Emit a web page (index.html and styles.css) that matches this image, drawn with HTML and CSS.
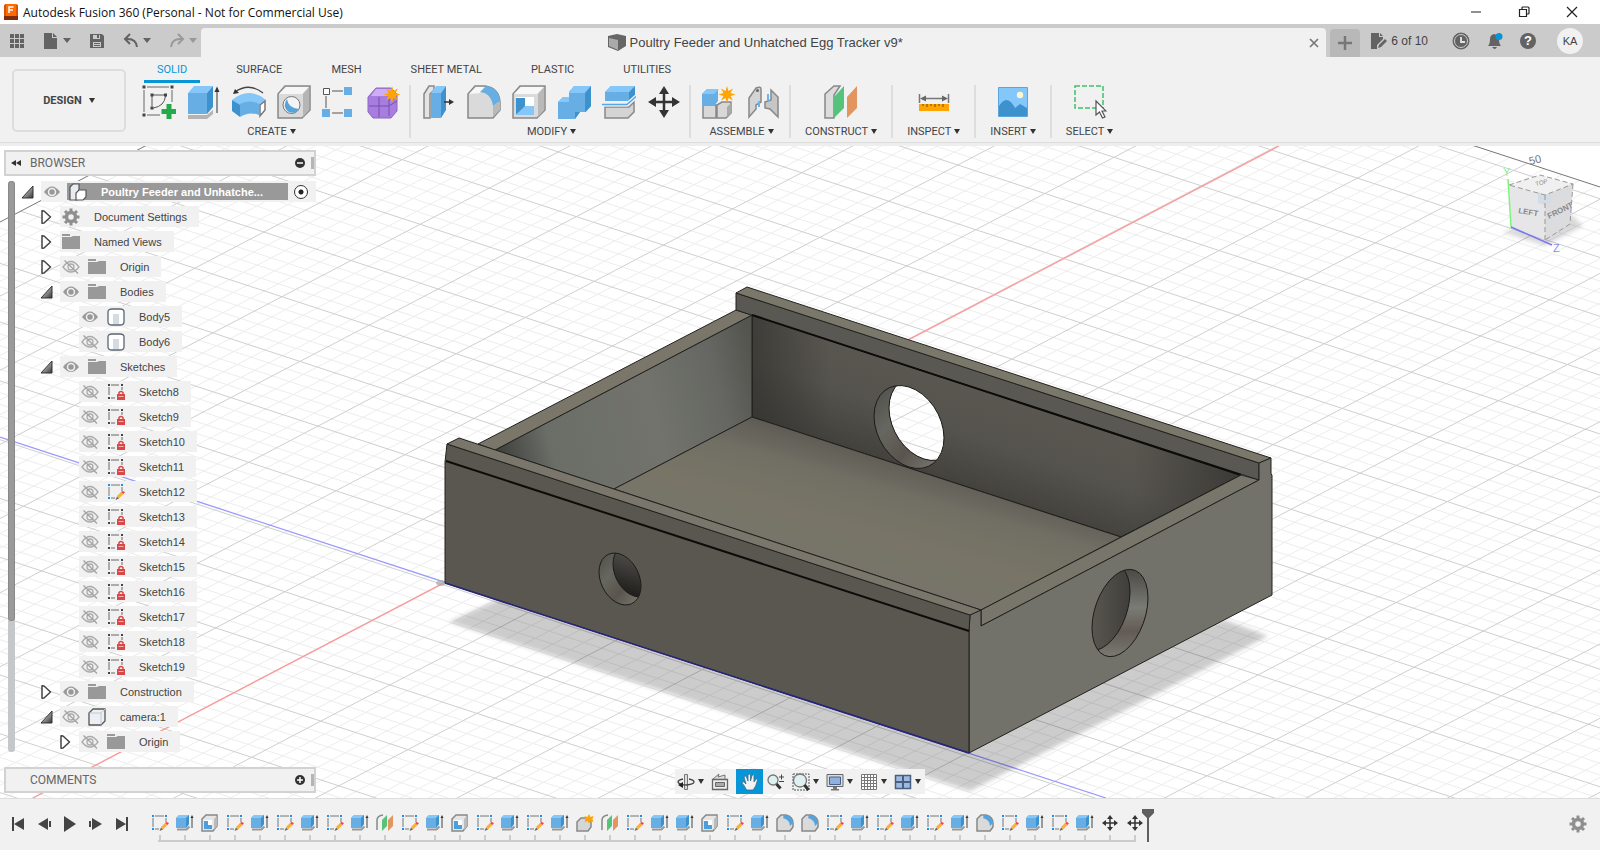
FILE: index.html
```html
<!DOCTYPE html>
<html lang="en">

<head>
    <meta charset="UTF-8">
    <meta name="viewport" content="width=device-width, initial-scale=1.0">
    <title>Autodesk Fusion 360 (Personal - Not for Commercial Use)</title>
    <link rel="stylesheet" href="styles.css">
</head>

<body>
    <!-- Icon sprite -->
    <svg class="sprite" aria-hidden="true">
        <defs>
            <linearGradient id="metal" x1="0" y1="0" x2="1" y2="1">
                <stop offset="0" stop-color="#fff" />
                <stop offset="1" stop-color="#333" />
            </linearGradient>
        </defs>

        <!-- ribbon, 34 x 34 -->
        <symbol id="i-sketch" viewBox="0 0 34 34">
            <path d="M5 2h22M2 5v22M5 30h13M30 5v12" fill="none" stroke="#666" />
            <path d="M11 10h11M10 11v10M23.500 11q-1 10-12 12" fill="none" stroke="#555" />
            <path d="M.5.500h3v3h-3zM28.500.500h3v3h-3zM.5 28.500h3v3h-3zM8.500 8.500h3v3h-3zM22 8.500h3v3h-3zM8.500 21.500h3v3h-3z" fill="#444" />
            <path d="M24.500 19h5v5h5v5h-5v5h-5v-5h-5v-5h5z" fill="#21ab4b" />
        </symbol>
        <symbol id="i-extrude" viewBox="0 0 34 34">
            <path d="M1 30h19l6-5v4l-6 5H1z" fill="#b4b4b4" />
            <path d="M1 8v21h19V8z" fill="#66aee4" />
            <path d="M1 8l6-7h19l-6 7z" fill="#86c7fa" />
            <path d="M20 8l6-7v21l-6 7z" fill="#3d91cd" />
            <path d="M30 28V4" stroke="#333" />
            <path d="M27.500 7L30 1.500 32.500 7z" fill="#333" />
        </symbol>
        <symbol id="i-revolve" viewBox="0 0 34 34">
            <path d="M3 7Q17-3 31 8" fill="none" stroke="#444" stroke-width="1.300" />
            <path d="M1 9l2-5 4 4z" fill="#333" />
            <path d="M0 15q17-14 34 0l-7 6q-9-6-20 0z" fill="#86c7fa" />
            <path d="M0 15l8 5v12l-8-6z" fill="#3d91cd" />
            <path d="M8 19q9-5 19 0v11q-10-4-19 2z" fill="#66aee4" />
            <path d="M28 20l5-4v9l-5 6z" fill="#fff" stroke="#777" stroke-width="1.500" />
        </symbol>
        <symbol id="i-hole" viewBox="0 0 34 34">
            <path d="M1 9l7-8h25v24l-8 8H1z" fill="#dadada" stroke="#888" stroke-width="1.500" />
            <path d="M2 9l7-7h23l-7 7z" fill="#f6f6f6" />
            <path d="M26 9l6-7v23l-6 7z" fill="#b5b5b5" />
            <circle cx="14.500" cy="20" r="8.500" fill="#f4f4f4" stroke="#777" />
            <path d="M10 14q1 9 12 10-4 6-11 2.500Q5 21 10 14z" fill="#55a3dd" />
        </symbol>
        <symbol id="i-pattern" viewBox="0 0 34 34">
            <path d="M10 6h11M4 11v12M10 28h11" stroke="#555" />
            <path d="M1.500 3.500h6v6h-6z" fill="#fff" stroke="#555" />
            <path d="M22 2h8v8h-8zM0 24h8v8H0zM22 24h8v8h-8z" fill="#66aee4" />
        </symbol>
        <symbol id="i-form" viewBox="0 0 34 34">
            <path d="M9 3h15l6 6v17l-6 7H6l-5-6V12z" fill="#a87de0" stroke="#8d67c2" />
            <path d="M9 4h14l5 4-6 3H4z" fill="#cfaef8" />
            <path d="M2 21h20l8-5M12 12v20M22 12v19" fill="none" stroke="#7650ae" />
            <path d="M25 1l1.500 5 4.500-2.500-2.500 4.500 5 1.500-5 1.500 2.500 4.500-4.500-2.500-1.500 5-1.500-5-4.500 2.500 2.500-4.500-5-1.500 5-1.500L19 3.500 23.500 6z" fill="#ffa400" />
        </symbol>
        <symbol id="i-press" viewBox="0 0 34 34">
            <path d="M2 9l5-8h5v4L8 9v24H2z" fill="#e4e4e4" stroke="#888" stroke-width="1.500" />
            <path d="M9 8h10v25H9z" fill="#66aee4" />
            <path d="M9 8l5-7h10l-5 7z" fill="#86c7fa" />
            <path d="M19 8l5-7v24l-5 8z" fill="#3d91cd" />
            <path d="M22 17h7" stroke="#333" stroke-width="1.500" />
            <path d="M27 14l5 3-5 3z" fill="#333" />
        </symbol>
        <symbol id="i-fillet" viewBox="0 0 34 34">
            <path d="M1 9l7-8h10q14 2 15 16v8l-7 8H1z" fill="#dadada" stroke="#888" stroke-width="1.500" />
            <path d="M2 9l7-7h9l-5 6z" fill="#f8f8f8" />
            <path d="M13 7l6-6q13 2 14 15l-7 5Q24 8 13 7z" fill="#66aee4" />
            <path d="M26 21l7-5v9l-7 7z" fill="#b9b9b9" />
        </symbol>
        <symbol id="i-shell" viewBox="0 0 34 34">
            <path d="M1 9l7-8h25v24l-8 8H1z" fill="#dadada" stroke="#888" stroke-width="1.500" />
            <path d="M2 9l7-7h23l-7 7z" fill="#f8f8f8" />
            <path d="M26 9l6-7v23l-6 7z" fill="#b9b9b9" />
            <path d="M4 12h18v18H4z" fill="#fff" />
            <path d="M4 13h9v9l-9 8z" fill="#3d91cd" />
            <path d="M4 30l9-9h9v9z" fill="#86c7fa" />
        </symbol>
        <symbol id="i-combine" viewBox="0 0 34 34">
            <path d="M1 17l5-5h6V7l5-6h17v20l-5 6h-6l-5 7H1z" fill="#66aee4" />
            <path d="M1 17l5-5h6v5zM12 8l5-7h17l-6 7z" fill="#86c7fa" />
            <path d="M28 8l6-7v20l-6 6zM18 27h5l-5 7z" fill="#3d91cd" />
        </symbol>
        <symbol id="i-split" viewBox="0 0 34 34">
            <path d="M3 7l6-6h24l-6 6v9H3z" fill="#66aee4" />
            <path d="M3 7l6-6h24l-6 6z" fill="#86c7fa" />
            <path d="M27 7l6-6v10l-6 5z" fill="#3d91cd" />
            <path d="M3 22h24l5-5v10l-6 6H3z" fill="#d4d4d4" stroke="#888" stroke-width="1.500" />
            <path d="M0 19.500h25l9-8" fill="none" stroke="#f1f1f1" stroke-width="4" />
            <path d="M0 19.500h25l9-8" fill="none" stroke="#55a7e8" stroke-width="1.500" />
        </symbol>
        <symbol id="i-move" viewBox="0 0 34 34">
            <path d="M17 5v24M5 17h24" stroke="#333" stroke-width="2.500" />
            <path d="M17 1l5 8H12zM17 33l5-8H12zM1 17l8-5v10zM33 17l-8-5v10z" fill="#333" />
        </symbol>
        <symbol id="i-newcomp" viewBox="0 0 34 34">
            <path d="M1 20h13v13H1zM15 20l5-3h9v11l-5 5h-9z" fill="#d8d8d8" stroke="#888" stroke-width="1.500" />
            <path d="M25 22l4-4v10l-4 4z" fill="#aaa" />
            <path d="M0 9l5-5h11v12l-4 5H0z" fill="#66aee4" />
            <path d="M0 9l5-5h12l-5 5z" fill="#86c7fa" />
            <path d="M25 1l1.500 5 4.500-2.500-2.500 4.500 5 1.500-5 1.500 2.500 4.500-4.500-2.500-1.500 5-1.500-5-4.500 2.500 2.500-4.500-5-1.500 5-1.500L19 3.500 23.500 6z" fill="#ffa400" />
        </symbol>
        <symbol id="i-joint" viewBox="0 0 34 34">
            <path d="M2 13l7-10q5-2 5 1v13l-5 3v4l-7 8z" fill="#d4d4d4" stroke="#888" stroke-width="1.500" />
            <path d="M18 17l6-2V5l7 7v20l-8-8-5-1z" fill="#c6c6c6" stroke="#888" stroke-width="1.500" />
            <path d="M12 16v6M21 9v7" stroke="#66b5f0" stroke-width="2" />
            <circle cx="10.500" cy="5.500" r="1.500" fill="#666" />
        </symbol>
        <symbol id="i-plane" viewBox="0 0 34 34">
            <path d="M1 9l9-8h6l-6 9v23H1z" fill="#dcdcdc" stroke="#888" stroke-width="1.500" />
            <path d="M10 12l10-11v22L10 33z" fill="#57c27b" />
            <path d="M23 12L33 1v22L23 33z" fill="#e3955f" />
        </symbol>
        <symbol id="i-measure" viewBox="0 0 34 34">
            <path d="M2.500 9v9M31.500 9v9M6 13.500h22" stroke="#777" stroke-width="1.500" />
            <path d="M3 13.500l6-3v6zM31 13.500l-6-3v6z" fill="#666" />
            <path d="M2 19h30v7H2z" fill="#ffa400" />
            <path d="M6 19v2M10 19v3M14 19v2M18 19v3M22 19v2M26 19v3" stroke="#6b4c10" />
        </symbol>
        <symbol id="i-insert" viewBox="0 0 34 34">
            <path d="M2.500 2.500h29v29h-29z" fill="#84c8fb" stroke="#5aa6dc" />
            <path d="M3 21q8-13 16 2l5-4 7 4v8H3z" fill="#3d91cd" />
            <circle cx="24" cy="10" r="3.200" fill="#fdf6c8" />
        </symbol>
        <symbol id="i-select" viewBox="0 0 34 34">
            <path d="M2 1h28v22H2z" fill="none" stroke="#3fc16b" stroke-width="1.500" stroke-dasharray="5 2" />
            <path d="M23 16v14l3.500-3 3 6 2.500-1-3-6h4z" fill="#fff" stroke="#555" stroke-width="1.200" />
        </symbol>

        <!-- timeline and browser, 18 x 18 -->
        <symbol id="t-sketch" viewBox="0 0 18 18">
            <path d="M4 2h9M2 4v9M4 15h4M15 4v4" fill="none" stroke="#777" />
            <path d="M1 1h2v2H1zM14 1h2v2h-2zM1 14h2v2H1z" fill="#1e8ff0" />
            <path d="M10 13l4-4 2.500 2L12 15.500z" fill="#fbb03b" />
            <path d="M14 9l1.500-1 2.500 1-1.500 2z" fill="#f2414b" />
            <path d="M8.500 17l1.500-3.500L12 15.500z" fill="#666" />
        </symbol>
        <symbol id="t-extrude" viewBox="0 0 18 18">
            <path d="M1 15.500h9.500l3-3" fill="none" stroke="#999" stroke-width="2" />
            <path d="M0 4l3-3h10v9l-3 4H0z" fill="#66aee4" />
            <path d="M0 4l3-3h10l-3 3z" fill="#86c7fa" />
            <path d="M10 4l3-3v9l-3 4z" fill="#3d91cd" />
            <path d="M16 14V3" stroke="#444" />
            <path d="M14.500 4L16 1l1.500 3z" fill="#333" />
        </symbol>
        <symbol id="t-shell" viewBox="0 0 18 18">
            <path d="M1 5l4-4h11v11l-4 5H1z" fill="#e6e6e6" stroke="#888" stroke-width="1.500" />
            <path d="M13 5l3-3v10l-3 4z" fill="#bbb" />
            <path d="M3 6h8v9H3z" fill="#fff" />
            <path d="M3 7h4v4h4v4H3z" fill="#4b9fdc" />
        </symbol>
        <symbol id="t-plane" viewBox="0 0 18 18">
            <path d="M1 16V6q0-4 6-5" fill="none" stroke="#888" stroke-width="1.500" />
            <path d="M6 6l5-5v11l-5 5z" fill="#57c27b" />
            <path d="M12 6l5-5v11l-5 5z" fill="#e3955f" />
        </symbol>
        <symbol id="t-fillet" viewBox="0 0 18 18">
            <path d="M1 5l4-4h5q7 2 7 8v4l-3 4H1z" fill="#dadada" stroke="#888" stroke-width="1.500" />
            <path d="M8 1q8 0 9 8l-3 3q0-6-7-8z" fill="#55a3dd" />
        </symbol>
        <symbol id="t-form" viewBox="0 0 18 18">
            <path d="M1 8l4-4h6l4 4v5l-3 4H1z" fill="#d6d6d6" stroke="#888" stroke-width="1.500" />
            <path d="M13 0l1.500 3 3-1-1 3 1 3-3-1L13 9.500 11.500 7l-3 1 1-3-1-3 3 1z" fill="#ffa400" />
        </symbol>
        <symbol id="t-move" viewBox="0 0 18 18">
            <path d="M9 3v12M3 9h12" stroke="#333" stroke-width="1.500" />
            <path d="M9 1l3 4H6zM9 17l3-4H6zM1 9l4-3v6zM17 9l-4-3v6z" fill="#333" />
        </symbol>
        <symbol id="b-lock" viewBox="0 0 18 18">
            <path d="M4 2h8M2 4v8M4 15h4M15 4v3" fill="none" stroke="#666" />
            <path d="M1 1h2v2H1zM14 1h2v2h-2zM1 14h2v2H1z" fill="#444" />
            <path d="M10 11h8v6h-8z" fill="#d94848" />
            <path d="M12 11V9.500q2-2 4 0V11" fill="none" stroke="#d94848" stroke-width="1.500" />
            <path d="M11.500 13.500h5" stroke="#f5b5b5" />
        </symbol>
        <symbol id="b-eye" viewBox="0 0 18 18">
            <path d="M1 9q8-11 16 0-8 10-16 0z" fill="#999" />
            <circle cx="9" cy="9" r="3.500" fill="#999" stroke="#f1f1f1" stroke-width="1.500" />
        </symbol>
        <symbol id="b-eye-off" viewBox="0 0 18 18">
            <path d="M1 9q8-11 16 0-8 10-16 0z" fill="none" stroke="#aaa" stroke-width="1.300" />
            <circle cx="9" cy="9" r="3" fill="none" stroke="#aaa" stroke-width="1.300" />
            <path d="M2.500 2.500l13.500 13" stroke="#a2a2a2" stroke-width="1.300" />
        </symbol>
        <symbol id="b-folder" viewBox="0 0 18 18">
            <path d="M0 4h9l2-1h7v13H0zM0 1h8v2H0z" fill="#999" />
        </symbol>
        <symbol id="b-gear" viewBox="0 0 18 18">
            <circle cx="9" cy="9" r="4.500" fill="none" stroke="#8f8f8f" stroke-width="3.500" />
            <path d="M9 .5V4M9 14v3.500M.5 9H4M14 9h3.500M3 3l2.500 2.500M12.500 12.500L15 15M15 3l-2.500 2.500M5.500 12.500L3 15" stroke="#8f8f8f" stroke-width="3" />
        </symbol>
        <symbol id="b-body" viewBox="0 0 18 18">
            <path d="M1 4q0-3 4-3h8q4 0 4 3v10q0 3-4 3H5q-4 0-4-3z" fill="#fff" stroke="#5d6672" stroke-width="1.300" />
            <path d="M6 6h6v10H6z" fill="#d5dbe3" />
        </symbol>
        <symbol id="b-comp" viewBox="0 0 18 18">
            <path d="M1 5l4-4h12v12l-4 4H1z" fill="#eceff3" stroke="#555" stroke-width="1.300" stroke-linejoin="round" />
            <path d="M1.500 5H13v11.500M13 5l4-4" fill="none" stroke="#c3c8d0" />
        </symbol>
        <symbol id="b-assembly" viewBox="0 0 18 18">
            <path d="M1 4l3-3h6v13l-2 3H1z" fill="#e8ebf0" stroke="#555" stroke-width="1.200" />
            <path d="M7 10l3-3h7v7l-3 3H7z" fill="#fff" stroke="#555" stroke-width="1.200" />
        </symbol>
        <symbol id="b-closed" viewBox="0 0 14 14">
            <path d="M2 .8v12.400L4 13l6.500-6L4 1z" fill="#fff" stroke="#444" stroke-width="1.500" stroke-linejoin="round" />
        </symbol>
        <symbol id="b-open" viewBox="0 0 14 14">
            <path d="M12 1v12H1z" fill="url(#metal)" stroke="#333" />
        </symbol>
    </svg>

    <header>
        <div class="title-bar">
            <svg class="app-logo" viewBox="0 0 16 18" aria-hidden="true">
                <path d="M2 1h11v12H2z" fill="#ff6b00" />
                <path d="M1 2l2-1v12l-2 1zM13 1l2 1v12l-2-1z" fill="#d95400" />
                <path d="M1 13h14v4H1z" fill="#7e2d0b" />
                <path d="M6 10V4h4.500M6 7h4" fill="none" stroke="#fff" stroke-width="1.500" />
            </svg>
            <h1 class="app-title">Autodesk Fusion 360 (Personal - Not for Commercial Use)</h1>
            <button class="window-button" aria-label="Minimize">
                <svg viewBox="0 0 12 12"><path d="M1 6h10" stroke="#222" /></svg>
            </button>
            <button class="window-button" aria-label="Restore">
                <svg viewBox="0 0 12 12"><path d="M1.500 3.500h7v7h-7zM4 3V1.500q0-.5 1-.5h5q1 0 1 1v5q0 1-1 1H9" fill="none" stroke="#222" stroke-width="1.200" /></svg>
            </button>
            <button class="window-button" aria-label="Close">
                <svg viewBox="0 0 12 12"><path d="M1 1l10 10M11 1L1 11" stroke="#222" stroke-width="1.200" /></svg>
            </button>
        </div>

        <div class="app-bar">
            <div class="quick-access">
                <button aria-label="Show data panel">
                    <svg class="icon-16" viewBox="0 0 16 16"><path d="M1 1h4v4H1zM6 1h4v4H6zM11 1h4v4h-4zM1 6h4v4H1zM6 6h4v4H6zM11 6h4v4h-4zM1 11h4v4H1zM6 11h4v4H6zM11 11h4v4h-4z" fill="#636363" /></svg>
                </button>
                <button class="with-caret" aria-label="File">
                    <svg class="icon-16" viewBox="0 0 16 16"><path d="M1 0h8v5h5v11H1zM10 0l4 4h-4z" fill="#636363" /></svg>
                    <span class="caret"></span>
                </button>
                <button aria-label="Save">
                    <svg class="icon-16" viewBox="0 0 16 16"><path d="M1 1h12l2 2v12H1z" fill="#636363" /><path d="M4 2h7v4H4zM4 9h8v5H4z" fill="#cbcbcb" /><path d="M8 2h2v3H8zM5 10h6v1H5zM5 12h6v1H5z" fill="#636363" /></svg>
                </button>
                <button class="with-caret" aria-label="Undo">
                    <svg class="icon-16" viewBox="0 0 16 16"><path d="M3 6q10-1 11 8" fill="none" stroke="#636363" stroke-width="2" /><path d="M7 1L2 6l5 5" fill="none" stroke="#636363" stroke-width="2" /></svg>
                    <span class="caret"></span>
                </button>
                <button class="with-caret" aria-label="Redo" disabled>
                    <svg class="icon-16" viewBox="0 0 16 16"><path d="M13 6Q3 5 2 14" fill="none" stroke="#999" stroke-width="2" /><path d="M9 1l5 5-5 5" fill="none" stroke="#999" stroke-width="2" /></svg>
                    <span class="caret"></span>
                </button>
            </div>
            <div class="document-tab">
                <span class="document-name">
                    <svg class="icon-18" viewBox="0 0 18 18"><path d="M0 2l9-2 9 2v10l-8 5-10-4z" fill="#666" /><path d="M1 4l9 2v10l-9-4z" fill="#aaa" /></svg>
                    Poultry Feeder and Unhatched Egg Tracker v9*
                </span>
                <button aria-label="Close document">
                    <svg class="icon-10" viewBox="0 0 10 10"><path d="M1 1l8 8M9 1L1 9" stroke="#777" stroke-width="1.700" /></svg>
                </button>
            </div>
            <button class="new-tab" aria-label="New design">
                <svg class="icon-14" viewBox="0 0 14 14"><path d="M7 0v14M0 7h14" stroke="#777" stroke-width="2.500" /></svg>
            </button>
            <div class="account">
                <button class="doc-limit">
                    <svg class="icon-16" viewBox="0 0 16 16"><path d="M0 0h8v4h4v2l-6 6v4H0zM9 0l3 3H9z" fill="#636363" /><path d="M7 15l1-3 6-6 2 2-6 6z" fill="#636363" /></svg>
                    6 of 10
                </button>
                <button aria-label="Job status">
                    <svg class="icon-18" viewBox="0 0 18 18"><circle cx="9" cy="9" r="8" fill="#636363" stroke="#636363" /><circle cx="9" cy="9" r="6.500" fill="none" stroke="#cbcbcb" /><path d="M9 5v5h4" fill="none" stroke="#e4e4e4" stroke-width="1.800" /></svg>
                </button>
                <button aria-label="Notifications">
                    <svg class="icon-18" viewBox="0 0 18 18"><path d="M2 14q2-2 2-7 0-4 4-5 5 1 5 5 0 5 2 7zM6 15h5q-2 4-5 0z" fill="#636363" /><circle cx="13" cy="4.500" r="3.500" fill="#0696d7" /></svg>
                </button>
                <button class="help" aria-label="Help">?</button>
                <button class="avatar" aria-label="Account KA">KA</button>
            </div>
        </div>

        <div class="ribbon">
            <button class="workspace">DESIGN <span class="caret"></span></button>
            <div class="ribbon-main">
                <nav class="ribbon-tabs">
                    <button class="active">SOLID</button>
                    <button>SURFACE</button>
                    <button>MESH</button>
                    <button>SHEET METAL</button>
                    <button>PLASTIC</button>
                    <button>UTILITIES</button>
                </nav>
                <div class="ribbon-groups">
                    <div class="ribbon-group">
                        <div class="tools">
                            <button aria-label="Create Sketch"><svg><use href="#i-sketch" /></svg></button>
                            <button aria-label="Extrude"><svg><use href="#i-extrude" /></svg></button>
                            <button aria-label="Revolve"><svg><use href="#i-revolve" /></svg></button>
                            <button aria-label="Hole"><svg><use href="#i-hole" /></svg></button>
                            <button aria-label="Rectangular Pattern"><svg><use href="#i-pattern" /></svg></button>
                            <button aria-label="Create Form"><svg><use href="#i-form" /></svg></button>
                        </div>
                        <button class="group-menu">CREATE <span class="caret"></span></button>
                    </div>
                    <div class="ribbon-group">
                        <div class="tools">
                            <button aria-label="Press Pull"><svg><use href="#i-press" /></svg></button>
                            <button aria-label="Fillet"><svg><use href="#i-fillet" /></svg></button>
                            <button aria-label="Shell"><svg><use href="#i-shell" /></svg></button>
                            <button aria-label="Combine"><svg><use href="#i-combine" /></svg></button>
                            <button aria-label="Split Body"><svg><use href="#i-split" /></svg></button>
                            <button aria-label="Move"><svg><use href="#i-move" /></svg></button>
                        </div>
                        <button class="group-menu">MODIFY <span class="caret"></span></button>
                    </div>
                    <div class="ribbon-group">
                        <div class="tools">
                            <button aria-label="New Component"><svg><use href="#i-newcomp" /></svg></button>
                            <button aria-label="Joint"><svg><use href="#i-joint" /></svg></button>
                        </div>
                        <button class="group-menu">ASSEMBLE <span class="caret"></span></button>
                    </div>
                    <div class="ribbon-group single">
                        <div class="tools">
                            <button aria-label="Offset Plane"><svg><use href="#i-plane" /></svg></button>
                        </div>
                        <button class="group-menu">CONSTRUCT <span class="caret"></span></button>
                    </div>
                    <div class="ribbon-group single">
                        <div class="tools">
                            <button aria-label="Measure"><svg><use href="#i-measure" /></svg></button>
                        </div>
                        <button class="group-menu">INSPECT <span class="caret"></span></button>
                    </div>
                    <div class="ribbon-group single">
                        <div class="tools">
                            <button aria-label="Canvas"><svg><use href="#i-insert" /></svg></button>
                        </div>
                        <button class="group-menu">INSERT <span class="caret"></span></button>
                    </div>
                    <div class="ribbon-group single">
                        <div class="tools">
                            <button aria-label="Window Selection"><svg><use href="#i-select" /></svg></button>
                        </div>
                        <button class="group-menu">SELECT <span class="caret"></span></button>
                    </div>
                </div>
            </div>
        </div>
    </header>

    <main class="viewport">
        <svg class="scene" viewBox="0 146 1600 652" preserveAspectRatio="xMidYMid slice" role="img" aria-label="Model">
            <defs>
                <linearGradient id="floor" gradientUnits="userSpaceOnUse" x1="820" y1="385" x2="770" y2="560">
                    <stop offset="0.150" stop-color="#4f4d47" />
                    <stop offset="0.450" stop-color="#716f64" />
                    <stop offset="0.700" stop-color="#787567" />
                    <stop offset="1" stop-color="#77736b" />
                </linearGradient>
                <linearGradient id="left-wall" gradientUnits="userSpaceOnUse" x1="495" y1="450" x2="760" y2="385">
                    <stop offset="0" stop-color="#3d3e3a" />
                    <stop offset="0.200" stop-color="#6b6d67" />
                    <stop offset="0.600" stop-color="#71736c" />
                    <stop offset="0.850" stop-color="#666762" />
                    <stop offset="1" stop-color="#555550" />
                </linearGradient>
                <linearGradient id="back-wall" gradientUnits="userSpaceOnUse" x1="1010" y1="385" x2="970" y2="500">
                    <stop offset="0" stop-color="#5b5852" />
                    <stop offset="0.500" stop-color="#55534d" />
                    <stop offset="1" stop-color="#3f3e3a" />
                </linearGradient>
                <linearGradient id="corner" gradientUnits="userSpaceOnUse" x1="752" y1="0" x2="1241" y2="0">
                    <stop offset="0" stop-color="#33322e" stop-opacity="0.700" />
                    <stop offset="0.160" stop-color="#33322e" stop-opacity="0" />
                    <stop offset="0.780" stop-color="#33322e" stop-opacity="0" />
                    <stop offset="1" stop-color="#33322e" stop-opacity="0.800" />
                </linearGradient>
                <linearGradient id="rim" x1="0" y1="0" x2="1" y2="1">
                    <stop offset="0" stop-color="#4a4843" />
                    <stop offset="0.350" stop-color="#666760" />
                    <stop offset="0.600" stop-color="#5a544d" />
                    <stop offset="1" stop-color="#85867e" />
                </linearGradient>
                <linearGradient id="rim-right" x1="0" y1="0" x2="0" y2="1">
                    <stop offset="0" stop-color="#45443f" />
                    <stop offset="0.450" stop-color="#7a7b75" />
                    <stop offset="0.700" stop-color="#625b53" />
                    <stop offset="1" stop-color="#7d7d76" />
                </linearGradient>
                <linearGradient id="inside" x1="0" y1="0" x2="0" y2="1">
                    <stop offset="0" stop-color="#5a5852" />
                    <stop offset="1" stop-color="#1f1e1c" />
                </linearGradient>
                <linearGradient id="inside-right" x1="0" y1="0" x2="1" y2="0">
                    <stop offset="0.300" stop-color="#5a5751" />
                    <stop offset="1" stop-color="#3f3e3a" />
                </linearGradient>
                <clipPath id="clip-back"><circle r="1" transform="matrix(35 11 0 40 909 427)" /></clipPath>
                <clipPath id="clip-front"><circle r="1" transform="matrix(21 7 0 25 620 579)" /></clipPath>
                <clipPath id="clip-right"><circle r="1" transform="matrix(28 -15 0 41 1120 613)" /></clipPath>
                <filter id="soften"><feGaussianBlur stdDeviation="2" /></filter>
                <!-- everything but the opening in the back wall -->
                <mask id="opening" maskUnits="userSpaceOnUse" x="400" y="250" width="900" height="560">
                    <path d="M400 250h900v560H400z" fill="#fff" />
                    <g clip-path="url(#clip-back)">
                        <circle r="1" transform="matrix(35 11 0 40 924 419)" fill="#000" />
                    </g>
                </mask>
            </defs>

            <g id="grid"></g>
            <path d="M33 798L1279 146" stroke="#f99" stroke-width="1.300" />
            <path d="M0 437L1106 798" stroke="#99f" stroke-width="1.300" />
            <ellipse cx="441" cy="583" rx="5" ry="3" fill="#aaa" fill-opacity="0.700" />

            <path d="M449 622L520 590L960 700L1225 620L1268 636L970 791z" fill="#000" fill-opacity="0.200" filter="url(#soften)" />

            <g class="model" mask="url(#opening)">
                <path d="M752 315L1241 475L1121 537L752 417z" fill="url(#back-wall)" />
                <path d="M752 315L1241 475L1121 537L752 417z" fill="url(#corner)" />
                <path d="M752 315L752 417L614 489L495 450z" fill="url(#left-wall)" />
                <path d="M752 417L1121 537L981 610L614 489z" fill="url(#floor)" />
                <path d="M736 310L752 315L495 450L478 444z" fill="#7a776a" />
                <path d="M736 293L1259 463L1259 480L736 310z" fill="#5a5852" />
                <path d="M736 293L747 287L1271 458L1259 463z" fill="#7a776b" />
                <path d="M752 315L1241 475" class="heavy" />
                <path d="M981 610L1241 475L1259 480L981 626z" fill="#78756a" />
                <path d="M969 753V631L970 615L981 610V626L1259 480V463L1271 458V474L1272 475V595z" fill="#72726b" />
                <path d="M445 583V462L447 444L970 615L969 631V753z" fill="#5a5750" />
                <path d="M447 444L459 438L981 610L970 615z" fill="#7a766b" />
                <path d="M446 461L969 631" class="heavy" />
            </g>
            <path d="M445 583L969 753" stroke="#25257c" stroke-width="1.500" />

            <g clip-path="url(#clip-back)">
                <path d="M870 380h80v95h-80z" fill="url(#rim)" mask="url(#opening)" />
                <circle r="1" transform="matrix(35 11 0 40 924 419)" class="edge" fill="none" />
            </g>
            <circle r="1" transform="matrix(35 11 0 40 909 427)" class="edge" fill="none" />

            <g clip-path="url(#clip-front)">
                <path d="M595 550h50v60h-50z" fill="url(#rim)" />
                <circle r="1" transform="matrix(21 7 0 25 634 571)" class="edge" fill="url(#inside)" />
            </g>
            <circle r="1" transform="matrix(21 7 0 25 620 579)" class="edge" fill="none" />

            <g clip-path="url(#clip-right)">
                <path d="M1090 565h60v95h-60z" fill="url(#rim-right)" />
                <circle r="1" transform="matrix(28 -15 0 41 1102 607)" class="edge" fill="url(#inside-right)" />
            </g>
            <circle r="1" transform="matrix(28 -15 0 41 1120 613)" class="edge" fill="none" />
        </svg>

        <aside class="browser">
            <div class="panel-header">
                <svg class="collapse" viewBox="0 0 12 8"><path d="M6 1v6L1 4zM11 1v6L6 4z" fill="#333" /></svg>
                <h2>BROWSER</h2>
                <button class="round" aria-label="Hide all">
                    <svg class="icon-10" viewBox="0 0 10 10"><circle cx="5" cy="5" r="5" fill="#333" /><path d="M2 5h6" stroke="#fff" stroke-width="1.500" /></svg>
                </button>
                <span class="grip"></span>
            </div>
            <div class="tree-area">
                <div class="scroll-track"><div class="scroll-thumb"></div></div>
                <ul class="tree" id="tree"></ul>
            </div>
        </aside>

        <div class="comments panel-header">
            <span class="collapse"></span>
            <h2>COMMENTS</h2>
            <button class="round" aria-label="Add comment">
                <svg class="icon-10" viewBox="0 0 10 10"><circle cx="5" cy="5" r="5" fill="#333" /><path d="M2 5h6M5 2v6" stroke="#fff" stroke-width="1.500" /></svg>
            </button>
            <span class="grip"></span>
        </div>

        <div class="navigation">
            <button class="with-caret" aria-label="Orbit">
                <svg class="icon-18" viewBox="0 0 18 18"><path d="M7.500 1.500h3v15h-3z" fill="#ddd" stroke="#777" /><path d="M6 6q-5 1-5 3 1 3 9 3 7-1 7-3t-5-3" fill="none" stroke="#444" stroke-width="1.300" /><path d="M1 12l5-3v6z" fill="#222" /></svg>
                <span class="caret"></span>
            </button>
            <button aria-label="Look At">
                <svg class="icon-18" viewBox="0 0 18 18"><path d="M2 6l6-5-1 3 7-2v4" fill="#ddd" stroke="#777" /><path d="M1.500 6.500h15v10h-15z" fill="#eee" stroke="#666" stroke-width="1.300" /><path d="M4.500 9.500h9v4h-9z" fill="#aaa" stroke="#666" /></svg>
            </button>
            <button class="pan" aria-label="Pan">
                <svg class="icon-18" viewBox="0 0 18 18"><path d="M5 16Q3 12 1 10q0-2 2-1l2 2L3 4q1-2 2.500 0L7 8V2q1-2 2.500 0v6L11 2.500q1.500-1.500 2 0L13 9l2-3q2-1 1.500 1Q15 14 12 17H6z" fill="#f3f3f3" stroke="#3a6c8b" stroke-width="0.800" /></svg>
            </button>
            <button aria-label="Zoom">
                <svg class="icon-18" viewBox="0 0 18 18"><circle cx="6" cy="7" r="5" fill="#dff0f0" stroke="#777" stroke-width="1.300" /><path d="M9.500 11l4 4.500" stroke="#333" stroke-width="3" /><path d="M12 4h5M14.500 1.500v5M12 8.500h5" stroke="#444" /></svg>
            </button>
            <button class="with-caret" aria-label="Zoom window">
                <svg class="icon-18" viewBox="0 0 18 18"><path d="M1 1h16v16H1z" fill="none" stroke="#555" stroke-dasharray="2 1" /><circle cx="8" cy="7.500" r="6.500" fill="#dff0f0" stroke="#777" stroke-width="1.300" /><path d="M12.500 12l4 5" stroke="#333" stroke-width="3" /></svg>
                <span class="caret"></span>
            </button>
            <button class="with-caret" aria-label="Display settings">
                <svg class="icon-18" viewBox="0 0 18 18"><path d="M1 1.500h16v12H1z" fill="#ddd" stroke="#666" /><path d="M3.500 4h11v7.500h-11z" fill="#8fb1dd" stroke="#47628a" /><path d="M7 14h4v2h2v1.500H5V16h2z" fill="#777" /></svg>
                <span class="caret"></span>
            </button>
            <button class="with-caret" aria-label="Grid and snaps">
                <svg class="icon-18" viewBox="0 0 18 18"><path d="M1 1h16v16H1z" fill="#fff" /><path d="M1.500 1.500h15v15h-15zM4.500 1v16M7.500 1v16M10.500 1v16M13.500 1v16M1 4.500h16M1 7.500h16M1 10.500h16M1 13.500h16" fill="none" stroke="#777" /></svg>
                <span class="caret"></span>
            </button>
            <button class="with-caret" aria-label="Viewports">
                <svg class="icon-18" viewBox="0 0 18 18"><path d="M1.500 2.500h15v13h-15z" fill="#9bbbe2" stroke="#4a5f80" stroke-width="1.500" /><path d="M9 2v14M1 9h16" stroke="#4a5f80" stroke-width="2" /></svg>
                <span class="caret"></span>
            </button>
        </div>

        <svg class="view-cube" viewBox="1490 146 110 110" role="img" aria-label="View cube">
            <path d="M1502 232L1545 246L1583 226L1572 215z" fill="#000" fill-opacity="0.150" filter="url(#soften)" />
            <path d="M1509 185L1540 175L1573 184L1545 195z" fill="#f0f0f0" />
            <path d="M1509 185L1545 195V240L1511 227z" fill="#e6e6e8" />
            <path d="M1545 195L1573 184L1570 224L1545 240z" fill="#dcdcde" />
            <path d="M1538 192l7 3v10l-7-2zM1545 195l6-2v9l-6 3z" fill="#d3dbe4" />
            <path d="M1509 185L1540 175L1573 184L1545 195zM1545 195V240M1573 184L1570 224L1545 240" class="cube-edge" />
            <path d="M1508 179L1511 227" stroke="#7cf57c" stroke-width="1.500" />
            <path d="M1511 227L1552 245" stroke="#7878f0" stroke-width="1.500" />
            <text x="1503" y="176" fill="#8df08d">Y</text>
            <text x="1553" y="252" fill="#8c8cf5">Z</text>
            <text class="cube-face" transform="translate(1518 213) rotate(10)">LEFT</text>
            <text class="cube-face" transform="translate(1549 219) rotate(-26)">FRONT</text>
            <text class="cube-top" transform="translate(1536 186) rotate(-14)">TOP</text>
            <text class="grid-size" transform="translate(1530 165) rotate(-14)">50</text>
        </svg>
    </main>

    <footer class="timeline">
        <div class="playback">
            <button aria-label="Go to beginning"><svg class="icon-16" viewBox="0 0 16 16"><path d="M2 1h2v14H2zM14 2v12L4 8z" fill="#444" /></svg></button>
            <button aria-label="Step back"><svg class="icon-16" viewBox="0 0 16 16"><path d="M12 2v12L2 8zM13 5h2v6h-2z" fill="#444" /></svg></button>
            <button aria-label="Play"><svg class="icon-16" viewBox="0 0 16 16"><path d="M2 0v16l12-8z" fill="#444" /></svg></button>
            <button aria-label="Step forward"><svg class="icon-16" viewBox="0 0 16 16"><path d="M4 2v12l10-6zM1 5h2v6H1z" fill="#444" /></svg></button>
            <button aria-label="Go to end"><svg class="icon-16" viewBox="0 0 16 16"><path d="M12 1h2v14h-2zM2 2v12l10-6z" fill="#444" /></svg></button>
        </div>
        <ol class="features" id="features"></ol>
        <svg class="marker" viewBox="0 0 12 34" aria-hidden="true"><path d="M0 0h12v4L7 9v24H5V9L0 4z" fill="#5f5f5f" /></svg>
        <button class="timeline-settings" aria-label="Timeline settings"><svg class="icon-18"><use href="#b-gear" /></svg></button>
    </footer>

    <script src="script.js"></script>
</body>

</html>
```
FILE: styles.css
```css
* {
    box-sizing: border-box;
}

body {
    display: flex;
    flex-direction: column;
    height: 100vh;
    margin: 0;
    overflow: hidden;
    background-color: #f1f1f1;
    color: #444;
    font-family: "Liberation Sans", Arial, sans-serif;
    font-size: 11px;
}

button {
    display: flex;
    align-items: center;
    justify-content: center;
    padding: 0;
    border: none;
    background: none;
    color: inherit;
    font: inherit;
}

svg {
    display: block;
    flex: none;
}

.sprite {
    position: absolute;
    width: 0;
    height: 0;
}

.icon-10 {
    width: 10px;
    height: 10px;
}

.icon-14 {
    width: 14px;
    height: 14px;
}

.icon-16 {
    width: 16px;
    height: 16px;
}

.icon-18 {
    width: 18px;
    height: 18px;
}

.caret {
    border: 3px solid transparent;
    border-top: 5px solid #333;
    border-bottom: none;
}

.with-caret {
    gap: 4px;
}

/* Title bar */
.title-bar {
    display: flex;
    align-items: center;
    height: 24px;
    padding: 0 4px 0 3px;
    background-color: #fff;
}

.app-logo {
    width: 16px;
    height: 18px;
}

.app-title {
    flex: 1;
    margin: 0 0 0 4px;
    color: #111;
    font-family: "Open Sans", sans-serif;
    font-size: 12px;
    font-weight: 400;
}

.window-button {
    width: 48px;
    height: 24px;
}

.window-button svg {
    width: 12px;
    height: 12px;
}

/* Application bar */
.app-bar {
    display: flex;
    align-items: flex-end;
    height: 33px;
    background-color: #cbcbcb;
    font-size: 12px;
}

.quick-access {
    display: flex;
    align-items: center;
    gap: 18px;
    min-width: 201px;
    height: 33px;
    padding-left: 9px;
}

.quick-access .caret {
    border-width: 4px;
    border-top: 5px solid #636363;
    border-bottom: none;
}

.quick-access button:disabled .caret {
    border-top-color: #999;
}

.document-tab {
    display: flex;
    flex: 1;
    align-items: center;
    height: 29px;
    padding-right: 7px;
    border-radius: 4px 4px 0 0;
    background-color: #f1f1f1;
}

.document-name {
    display: flex;
    flex: 1;
    align-items: center;
    justify-content: center;
    gap: 4px;
    font-size: 13px;
}

.new-tab {
    width: 30px;
    height: 28px;
    margin-left: 4px;
    border-radius: 4px 4px 0 0;
    background-color: #b8b8b8;
}

.account {
    display: flex;
    align-items: center;
    gap: 16px;
    height: 33px;
    padding: 0 17px 0 11px;
}

.doc-limit {
    gap: 4px;
    margin-right: 8px;
}

.help {
    width: 16px;
    height: 16px;
    border-radius: 50%;
    background-color: #636363;
    color: #fff;
    font-size: 13px;
    font-weight: 700;
}

.avatar {
    width: 26px;
    height: 26px;
    margin-left: 5px;
    border-radius: 50%;
    background-color: #f1f1f1;
    font-size: 11px;
}

/* Ribbon */
.ribbon {
    display: flex;
    height: 89px;
    border-bottom: 3px solid #eee;
    font-family: Roboto, sans-serif;
    box-shadow: inset 0 -1px #ddd;
}

.workspace {
    gap: 7px;
    width: 114px;
    height: 63px;
    margin: 12px 15px 0 12px;
    border: 2px solid #ddd;
    border-radius: 5px;
    font-weight: 700;
}

.ribbon-tabs {
    display: flex;
    gap: 23px;
    padding-left: 3px;
}

.ribbon-tabs button {
    height: 26px;
    padding: 2px 13px 0;
    border-bottom: 3px solid transparent;
}

.ribbon-tabs .active {
    border-color: #0696d7;
    color: #0696d7;
}

.ribbon-groups {
    display: flex;
}

.ribbon-group {
    display: flex;
    flex-direction: column;
    align-items: center;
    gap: 6px;
    height: 53px;
    margin-top: 2px;
    padding: 0 8px 0 11px;
    border-right: 2px solid #ddd;
}

.ribbon-group:first-child {
    padding-left: 1px;
}

.ribbon-group.single {
    padding: 0 14px;
}

.ribbon-group:last-child {
    border: none;
}

.tools {
    display: flex;
    gap: 11px;
}

.tools svg {
    width: 34px;
    height: 34px;
}

.group-menu {
    gap: 3px;
    height: 16px;
    white-space: nowrap;
}

/* Viewport */
.viewport {
    position: relative;
    flex: 1;
    min-height: 0;
    background-color: #fff;
}

.scene {
    position: absolute;
    width: 100%;
    height: 100%;
}

.grid-minor {
    fill: none;
    stroke: #ededed;
}

.grid-major {
    fill: none;
    stroke: #cfcfcf;
}

.grid-border {
    fill: none;
    stroke: #777;
}

.model path {
    stroke: #22211e;
    stroke-linejoin: round;
}

.model .heavy {
    stroke: #0c0c0b;
    stroke-width: 2;
}

.edge {
    stroke: #1c1b19;
    stroke-width: 1;
    vector-effect: non-scaling-stroke;
}

.view-cube {
    position: absolute;
    top: 0;
    right: 0;
    width: 110px;
    height: 110px;
    font-size: 11px;
}

.cube-edge {
    fill: none;
    stroke: #999;
    stroke-dasharray: 5 3;
}

.cube-face {
    fill: #888;
    font-size: 8px;
    font-weight: 700;
}

.cube-top {
    fill: #888;
    font-size: 6px;
}

.grid-size {
    fill: #777;
    font-size: 11px;
}

/* Browser */
.browser {
    position: absolute;
    top: 4px;
    left: 4px;
    width: 312px;
}

.panel-header {
    display: flex;
    align-items: center;
    height: 26px;
    padding-left: 4px;
    border: 2px solid #d2d2d2;
    background-color: #f1f1f1;
    color: #666;
    font-family: Roboto, sans-serif;
}

.panel-header h2 {
    flex: 1;
    margin: 0 0 0 8px;
    font-size: 12px;
    font-weight: 400;
}

.collapse {
    width: 12px;
    height: 8px;
}

.grip {
    width: 3px;
    height: 12px;
    margin-left: 6px;
    background-color: #b5b5b5;
}

.tree-area {
    display: flex;
    padding: 5px 0 0 4px;
}

.scroll-track {
    width: 7px;
    border-radius: 3px;
    background-color: #c5c8ca;
}

.scroll-thumb {
    height: 77%;
    border: 1px solid #888;
    border-radius: 3px;
    background-color: #9a9a9a;
}

.tree {
    display: flex;
    flex: 1;
    flex-direction: column;
    gap: 4px;
    margin: 0;
    padding: 0 0 0 6px;
    list-style: none;
}

.tree-row {
    display: flex;
    align-items: center;
    gap: 6px;
    height: 21px;
}

.level-1 {
    padding-left: 19px;
}

.level-2 {
    padding-left: 38px;
}

.twisty {
    width: 14px;
    height: 14px;
}

.twisty svg {
    width: 14px;
    height: 14px;
}

.node {
    display: flex;
    align-items: center;
    gap: 8px;
    height: 21px;
    padding: 0 12px 0 2px;
    background-color: #f1f1f1;
}

.node-name {
    margin-left: 6px;
    white-space: nowrap;
}

.level-0 .node {
    flex: 1;
    gap: 6px;
    padding-right: 8px;
}

.node-root {
    display: flex;
    flex: 1;
    align-items: center;
    height: 17px;
    padding: 0 8px 0 2px;
    background-color: #999;
    color: #fff;
    font-weight: 700;
}

.node-root .node-name {
    margin-left: 14px;
}

.activate {
    width: 14px;
    height: 14px;
    margin: 0;
    appearance: none;
    border: 1px solid #333;
    border-radius: 50%;
    background: radial-gradient(#222 0 2px, #fff 3px);
}

.comments {
    position: absolute;
    bottom: 5px;
    left: 4px;
    width: 312px;
}

/* Navigation bar */
.navigation {
    position: absolute;
    bottom: 4px;
    left: 50%;
    display: flex;
    align-items: center;
    gap: 7px;
    height: 25px;
    padding: 0 4px 0 2px;
    background-color: #f1f1f1;
    transform: translateX(-50%);
}

.navigation .with-caret {
    gap: 3px;
}

.pan {
    width: 27px;
    height: 25px;
    margin-right: -3px;
    background-color: #0696d7;
}

/* Timeline */
.timeline {
    display: flex;
    align-items: flex-start;
    height: 52px;
    padding: 10px 13px 0 10px;
    border-top: 1px solid #ddd;
}

.playback {
    display: flex;
    gap: 10px;
    margin: 7px 21px 0 0;
}

.features {
    display: flex;
    margin: 0;
    padding: 0;
    list-style: none;
}

.features li {
    width: 25px;
    height: 33px;
    padding-top: 5px;
    border-bottom: 2px solid #ccc;
}

/* tick joining each feature to the line */
.features li::after {
    content: "";
    display: block;
    width: 2px;
    height: 6px;
    margin: 3px 0 0 8px;
    background-color: #ccc;
}

.features li:first-child {
    border-image: linear-gradient(90deg, transparent 8px, #ccc 8px) 2;
}

.features li:last-child {
    width: 10px;
}

.marker {
    width: 12px;
    height: 34px;
    margin-left: 6px;
}

.timeline-settings {
    margin: 6px 0 0 auto;
}
```
FILE: script.js
```js
const SVG_NS = 'http://www.w3.org/2000/svg';

// Ground grid: one major cell is (87.1, 28.5) along the blue axis
// and (69.1, -36.2) along the red one, each split in five.
const project = (a, b) => {
    const x = 441 + a * 87.1 + b * 69.1;
    const y = 584 + a * 28.5 - b * 36.2;
    return `${x.toFixed(1)} ${y.toFixed(1)}`;
};

const A_MIN = -40, A_MAX = 85, B_MIN = -50, B_MAX = 66;
const lines = { minor: '', major: '', border: '' };

for (let i = A_MIN; i <= A_MAX; i++) {
    const kind = i === A_MIN ? 'border' : i % 5 === 0 ? 'major' : 'minor';
    lines[kind] += `M${project(i / 5, B_MIN / 5)}L${project(i / 5, B_MAX / 5)}`;
}
for (let i = B_MIN; i <= B_MAX; i++) {
    const kind = i === B_MAX ? 'border' : i % 5 === 0 ? 'major' : 'minor';
    lines[kind] += `M${project(A_MIN / 5, i / 5)}L${project(A_MAX / 5, i / 5)}`;
}

const grid = document.getElementById('grid');
Object.keys(lines).forEach(kind => {
    const path = document.createElementNS(SVG_NS, 'path');
    path.setAttribute('d', lines[kind]);
    path.setAttribute('class', `grid-${kind}`);
    grid.appendChild(path);
});

// Browser tree: level, name, icon, visibility, twisty
const nodes = [
    [1, 'Document Settings', 'gear', '', 'closed'],
    [1, 'Named Views', 'folder', '', 'closed'],
    [1, 'Origin', 'folder', 'eye-off', 'closed'],
    [1, 'Bodies', 'folder', 'eye', 'open'],
    [2, 'Body5', 'body', 'eye', ''],
    [2, 'Body6', 'body', 'eye-off', ''],
    [1, 'Sketches', 'folder', 'eye', 'open']
];
for (let i = 8; i <= 19; i++) {
    nodes.push([2, `Sketch${i}`, i === 12 ? 'sketch' : 'lock', 'eye-off', '']);
}
nodes.push(
    [1, 'Construction', 'folder', 'eye', 'closed'],
    [1, 'camera:1', 'comp', 'eye-off', 'open'],
    [2, 'Origin', 'folder', 'eye-off', 'closed']
);

const icon = id => `<svg class="icon-18"><use href="#${id}" /></svg>`;
const twisty = state => state
    ? `<button class="twisty" aria-label="Toggle"><svg><use href="#b-${state}" /></svg></button>`
    : '<span class="twisty"></span>';
const eye = state => state ? `<button aria-label="Show or hide">${icon('b-' + state)}</button>` : '';

const root = `
    <li class="tree-row level-0">
        ${twisty('open')}
        <div class="node">
            ${eye('eye')}
            <span class="node-root">${icon('b-assembly')}<span class="node-name">Poultry Feeder and Unhatche...</span></span>
            <input class="activate" type="radio" name="active" aria-label="Activate component" checked>
        </div>
    </li>`;

document.getElementById('tree').innerHTML = root + nodes.map(([level, name, type, visible, state]) => `
    <li class="tree-row level-${level}">
        ${twisty(state)}
        <div class="node">
            ${eye(visible)}
            ${icon(type === 'sketch' ? 't-sketch' : 'b-' + type)}
            <span class="node-name">${name}</span>
        </div>
    </li>`).join('');

// Timeline features in the order they were modelled
const names = { s: 'sketch', e: 'extrude', h: 'shell', p: 'plane', n: 'form', f: 'fillet', m: 'move' };
const history = 'sehsesesepsehsesenpseehseffsesesefsesemm';

document.getElementById('features').innerHTML = [...history].map(key =>
    `<li><button aria-label="${names[key]}">${icon('t-' + names[key])}</button></li>`).join('');
```
